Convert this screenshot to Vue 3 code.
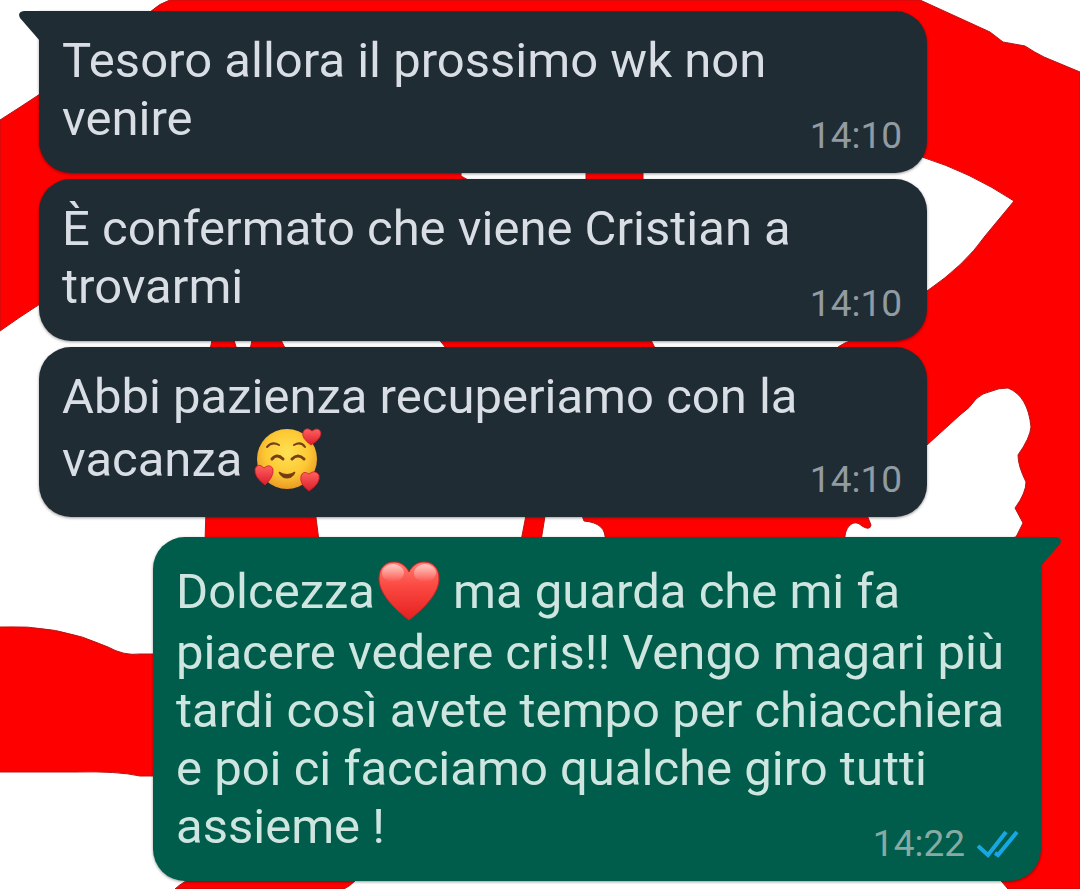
<script setup>
const messages = [
  { id: 1, side: 'in', tail: true, time: '14:10', parts: ['Tesoro allora il prossimo wk non venire'] },
  { id: 2, side: 'in', time: '14:10', parts: ['È confermato che viene Cristian a trovarmi'] },
  { id: 3, side: 'in', time: '14:10', parts: ['Abbi pazienza recuperiamo con la vacanza ', { emoji: 'hearts' }] },
  {
    id: 4,
    side: 'out',
    tail: true,
    time: '14:22',
    read: true,
    parts: [
      'Dolcezza',
      { emoji: 'heart' },
      ' ma guarda che mi fa piacere vedere cris!! Vengo magari più tardi così avete tempo per chiacchiera e poi ci facciamo qualche giro tutti assieme !',
    ],
  },
]
</script>

<template>
  <main class="chat">
    <svg class="wallpaper" viewBox="0 0 1080 889" preserveAspectRatio="xMidYMin slice" aria-hidden="true">
      <defs>
        <radialGradient id="face" cx="0.5" cy="0.4" r="0.6">
          <stop offset="0" stop-color="#ffe153" />
          <stop offset="0.6" stop-color="#fdc935" />
          <stop offset="1" stop-color="#ea9a24" />
        </radialGradient>
        <linearGradient id="small-heart" x1="0" y1="0" x2="0" y2="1">
          <stop offset="0" stop-color="#ff6260" />
          <stop offset="1" stop-color="#dc1d2b" />
        </linearGradient>
        <linearGradient id="big-heart" x1="0" y1="0" x2="0" y2="1">
          <stop offset="0" stop-color="#ff7d70" />
          <stop offset="0.4" stop-color="#fb4a43" />
          <stop offset="1" stop-color="#e5201f" />
        </linearGradient>
        <linearGradient id="gloss" x1="0" y1="0" x2="0" y2="1">
          <stop offset="0" stop-color="#fff" stop-opacity="0.6" />
          <stop offset="1" stop-color="#fff" stop-opacity="0" />
        </linearGradient>
      </defs>
      <g class="ink">
        <path d="M150 12Q160 3 170 0H920L990 32L1003 42L1025 46Q1034 52 1044 57L1080 72V889H1008L966 840H1030V600H1000V540L1016 537L1023 523L1015 508Q1026 493 1026 482Q1018 466 1018 455Q1030 438 1031 427Q1028 396 1008 388Q998 388 992 391Q982 393 976 399Q970 408 960 415L927 445L900 450V350H834Q845 341 860 338L927 291Q965 265 985 236L1014 201Q970 172 922 157L880 150L800 20H150Z" />
        <path d="M0 120Q22 106 40 94L461 120V176L470 181H60L40 304Q18 318 0 331Z" />
        <path d="M586 170H643V184H586Z" />
        <path d="M212 340H234L237 350H210ZM252 340H281L286 350H250ZM438 338H650L657 352H449Z" />
        <path d="M206 510H315L319 541H205ZM527 510H546L541 541H521ZM580 510H865L871 525Q870 531 862 526Q856 520 850 525Q844 531 845 541H605Q607 523 584 521Z" />
        <path d="M-2 627Q58 624 108 647Q124 656 140 654H165V776H140Q118 771 75 772H-2Z" />
        <path d="M175 889Q183 881 200 875H345L355 881Q350 886 344 889Z" />
      </g>
    </svg>

    <article v-for="m in messages" :key="m.id" class="bubble" :class="[m.side, { tailed: m.tail }]">
      <svg v-if="m.tail" class="tail" viewBox="0 0 24 32" aria-hidden="true">
        <path d="M24 0H5Q-2 1 1 7L21 30H24Z" />
      </svg>
      <p class="text"><template v-for="(p, i) in m.parts" :key="i"><template v-if="typeof p === 'string'">{{ p }}</template><svg v-else-if="p.emoji === 'hearts'" class="emoji" viewBox="0 0 66 64" role="img" aria-label="🥰">
        <circle cx="32" cy="32" r="30" fill="url(#face)" />
        <g fill="none" stroke="#744019" stroke-linecap="round" stroke-width="2">
          <path d="M12 20Q17 14 24 18" />
          <path d="M39 18Q46 14 50 20" />
          <path stroke-width="3" d="M17 32Q22 26 28 32" />
          <path stroke-width="3" d="M37 32Q43 26 49 32" />
        </g>
        <path d="M24 45Q32 50 40 45Q38 51 32 51Q26 51 24 45Z" fill="#743a17" stroke="#743a17" stroke-linejoin="round" />
        <g fill="url(#small-heart)" stroke="#c91d2a" stroke-width="0.8">
          <path d="M56 18Q46 11 48 5Q51 -1 57 4Q64 -1 66 6Q66 12 56 18Z" />
          <path d="M10 58Q-1 50 0 42Q3 35 9 41Q15 36 18 42Q19 50 10 58Z" />
          <path d="M54 64Q44 57 46 49Q48 43 54 47Q60 42 64 48Q66 56 54 64Z" />
        </g>
      </svg><svg v-else class="emoji" viewBox="0 0 66 64" role="img" aria-label="❤️">
        <path d="M34 61C25 54 4 37 4 20C4 9 10 3 19 3C26 3 31 7 34 13C37 7 42 3 49 3C58 3 64 9 64 20C64 37 43 54 34 61Z" fill="url(#big-heart)" stroke="#c9252a" />
        <ellipse cx="18" cy="14" rx="11" ry="9" fill="url(#gloss)" />
        <ellipse cx="50" cy="14" rx="11" ry="9" fill="url(#gloss)" />
      </svg></template></p>
      <footer class="meta">
        <time>{{ m.time }}</time>
        <svg v-if="m.read" class="ticks" viewBox="0 0 42 30" role="img" aria-label="Letto">
          <path d="M1 17L11 26L29 3M18 24L21 26L40 3" />
        </svg>
      </footer>
    </article>
  </main>
</template>

<style>
body {
  margin: 0;
}
</style>

<style scoped>
.chat {
  position: relative;
  box-sizing: border-box;
  min-height: 100vh;
  display: flex;
  flex-direction: column;
  gap: 6px;
  padding: 11px 39px 8px;
  overflow: hidden;
  background: #fff;
  font-family: Roboto, "Liberation Sans", sans-serif;
}

.wallpaper {
  position: absolute;
  inset: 0;
  width: 100%;
  height: 100%;
}

.ink {
  fill: #fe0000;
  stroke: #b81414;
  stroke-width: 1;
}

.bubble {
  position: relative;
  display: grid;
  padding: 21px 25px 25px 23px;
  border-radius: 32px;
  box-shadow: 0 1px 3px rgba(0, 0, 0, 0.4);
}

.in {
  margin-right: 114px;
  background: #1f2c34;
  color: #d9dee4;
}

.out {
  margin-top: 14px;
  margin-left: 114px;
  padding-right: 22px;
  background: #005d4b;
  color: #cfe5e0;
}

.in.tailed {
  border-top-left-radius: 0;
}

.out.tailed {
  border-top-right-radius: 0;
}

.tail {
  position: absolute;
  top: 0;
  width: 24px;
  height: 32px;
}

.in .tail {
  left: -20px;
  fill: #1f2c34;
}

.out .tail {
  right: -20px;
  fill: #005d4b;
  transform: scaleX(-1);
}

.text {
  grid-area: 1 / 1;
  margin: 0;
  font-size: 49px;
  line-height: 58px;
}

.emoji {
  width: 66px;
  height: 64px;
  margin: 1px 0;
  vertical-align: -16px;
  overflow: visible;
}

.meta {
  grid-area: 1 / 1;
  align-self: end;
  justify-self: end;
  display: flex;
  align-items: center;
  gap: 12px;
  margin-bottom: -10px;
  color: #929ba1;
  font-size: 37px;
  line-height: 44px;
}

.out .meta {
  color: #87aba4;
}

.ticks {
  width: 42px;
  height: 30px;
  fill: none;
  stroke: #17a8e4;
  stroke-width: 4;
}
</style>
